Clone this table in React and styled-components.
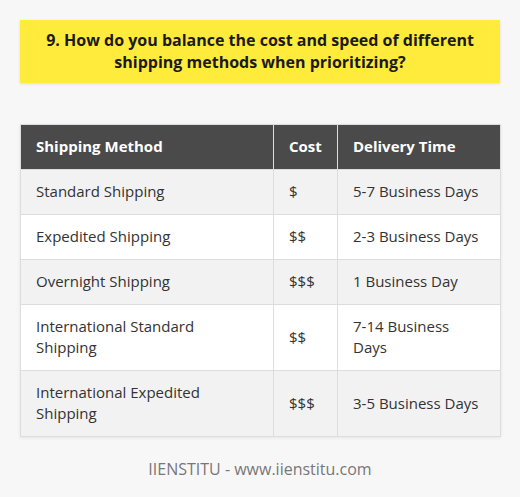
import React from "react";
import styled, { createGlobalStyle } from "styled-components";

const Global = createGlobalStyle`
  html, body { margin: 0; padding: 0; background: #f7f7f7; }
  body { font-family: "Open Sans", "Liberation Sans", sans-serif; }
`;

const Page = styled.div`
  width: 520px;
  height: 497px;
  box-sizing: border-box;
  padding: 20px 20px 0;
  display: flex;
  flex-direction: column;
  background: #f7f7f7;
`;

const Title = styled.h1`
  margin: 0;
  background: #ffeb3b;
  padding: 9px 20px 10px;
  text-align: center;
  font-size: 16px;
  line-height: 22px;
  font-weight: 700;
  color: #1a1a1a;
  box-shadow: 0 1px 3px rgba(0, 0, 0, 0.1);
`;

const Table = styled.table`
  margin-top: 41px;
  width: 480px;
  border-collapse: collapse;
  table-layout: fixed;
  box-shadow: 0 1px 3px rgba(0, 0, 0, 0.08);
  font-size: 15px;
  line-height: 21px;
`;

const Th = styled.th`
  background: #4a4a4a;
  color: #fff;
  font-weight: 700;
  text-align: left;
  padding: 11px 15px 12px;
  border: 1px solid #ddd;
`;

const Tr = styled.tr`
  background: ${(p) => (p.$alt ? "#f2f2f2" : "#fff")};
`;

const Td = styled.td`
  color: #333;
  padding: 11px 15px 12px;
  border: 1px solid #ddd;
  vertical-align: middle;
`;

const Footer = styled.div`
  margin-top: 21px;
  text-align: center;
  font-size: 16px;
  line-height: 22px;
  color: #777;
`;

const rows = [
  ["Standard Shipping", "$", "5-7 Business Days"],
  ["Expedited Shipping", "$$", "2-3 Business Days"],
  ["Overnight Shipping", "$$$", "1 Business Day"],
  ["International Standard Shipping", "$$", "7-14 Business Days"],
  ["International Expedited Shipping", "$$$", "3-5 Business Days"],
];

export default function App() {
  return (
    <>
      <Global />
      <Page>
        <Title>
          9. How do you balance the cost and speed of different shipping methods when prioritizing?
        </Title>
        <Table>
          <colgroup>
            <col style={{ width: 253 }} />
            <col style={{ width: 64 }} />
            <col style={{ width: 163 }} />
          </colgroup>
          <thead>
            <tr>
              <Th>Shipping Method</Th>
              <Th>Cost</Th>
              <Th>Delivery Time</Th>
            </tr>
          </thead>
          <tbody>
            {rows.map((r, i) => (
              <Tr key={i} $alt={i % 2 === 0}>
                {r.map((c, j) => (
                  <Td key={j}>{c}</Td>
                ))}
              </Tr>
            ))}
          </tbody>
        </Table>
        <Footer>IIENSTITU - www.iienstitu.com</Footer>
      </Page>
    </>
  );
}
